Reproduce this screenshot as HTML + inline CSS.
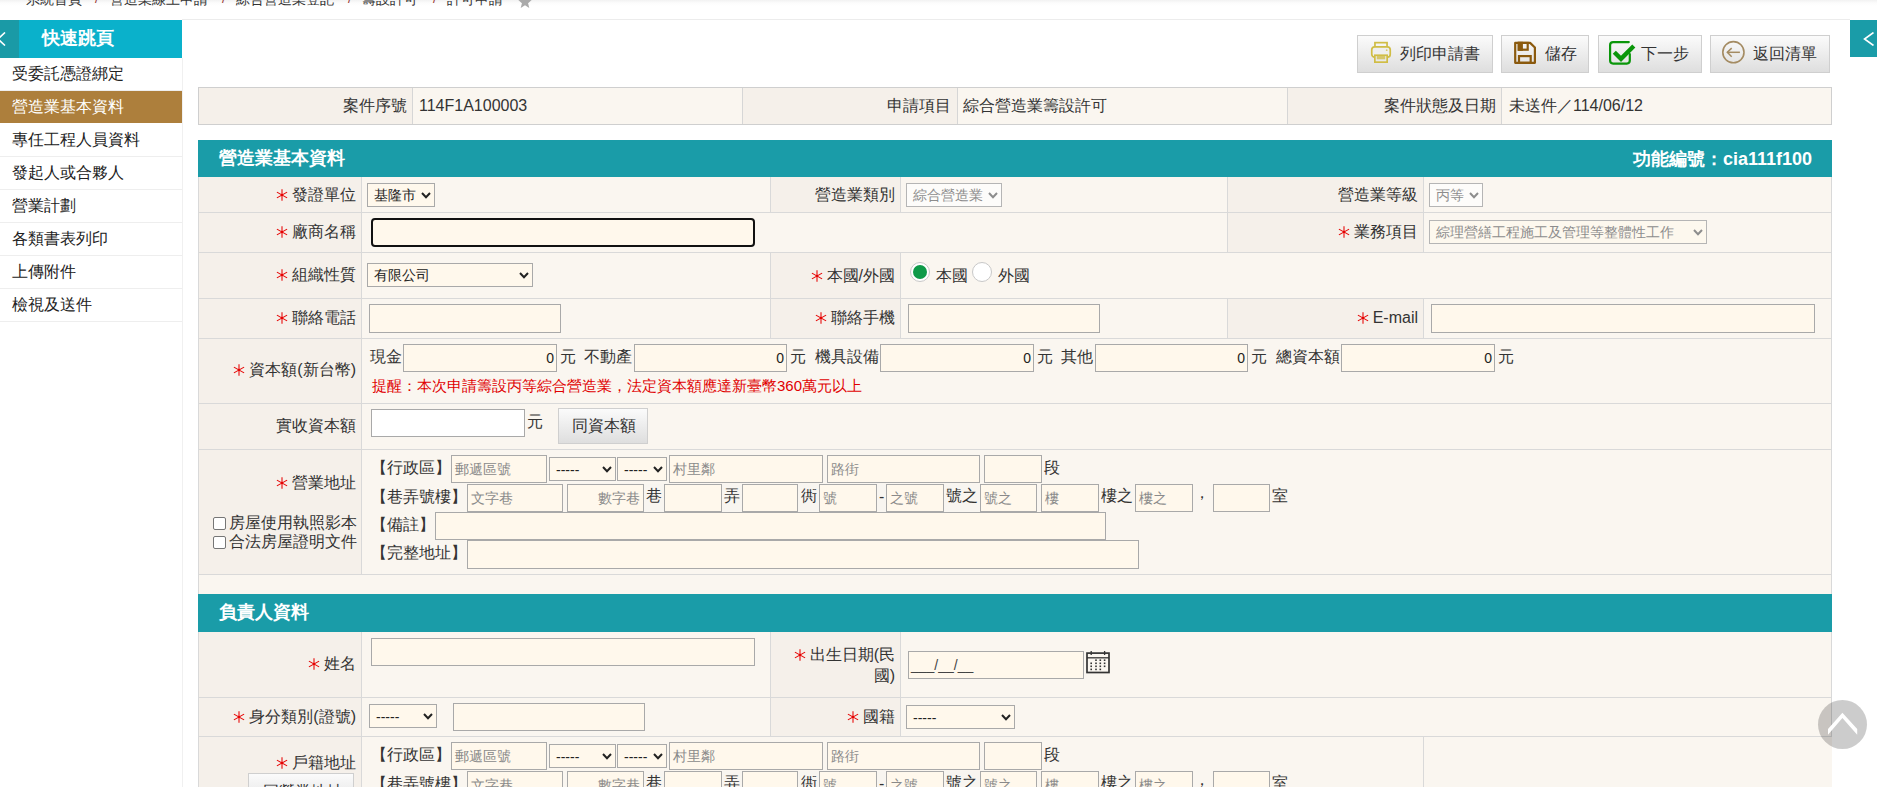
<!DOCTYPE html><html><head><meta charset="utf-8"><style>
html,body{margin:0;padding:0;width:1877px;height:787px;overflow:hidden;background:#fff;font-family:"Liberation Sans",sans-serif;}
body>div{position:absolute;}
.inp{box-sizing:border-box;border:1px solid #a9a9a9;}
.cb{width:13px;height:13px;box-sizing:border-box;border:1px solid #767676;border-radius:2px;background:#fff;}
.btn{box-sizing:border-box;border:1px solid #cfcfcf;background:linear-gradient(#fbfbfb,#dedede);}
</style></head><body>
<div style="left:0px;top:0px;width:1877px;height:6px;background:linear-gradient(#f2f2f2,#fcfcfc 50%,#fff)"></div>
<div style="left:26px;top:-8px;font-size:14px;line-height:1;color:#333;white-space:nowrap;">系統首頁</div>
<div style="left:110px;top:-8px;font-size:14px;line-height:1;color:#333;white-space:nowrap;">營造業線上申請</div>
<div style="left:236px;top:-8px;font-size:14px;line-height:1;color:#333;white-space:nowrap;">綜合營造業登記</div>
<div style="left:362px;top:-8px;font-size:14px;line-height:1;color:#333;white-space:nowrap;">籌設許可</div>
<div style="left:447px;top:-8px;font-size:14px;line-height:1;color:#333;white-space:nowrap;">許可申請</div>
<div style="left:95px;top:-8px;font-size:13px;line-height:1;color:#933;white-space:nowrap;">/</div>
<div style="left:222px;top:-8px;font-size:13px;line-height:1;color:#933;white-space:nowrap;">/</div>
<div style="left:348px;top:-8px;font-size:13px;line-height:1;color:#933;white-space:nowrap;">/</div>
<div style="left:433px;top:-8px;font-size:13px;line-height:1;color:#933;white-space:nowrap;">/</div>
<div style="left:518px;top:-5px;width:14px;height:14px"><svg width="14" height="14" viewBox="0 0 16 16" style="position:static"><polygon points="8,0 10.2,5.2 15.8,5.6 11.5,9.3 12.9,14.8 8,11.8 3.1,14.8 4.5,9.3 0.2,5.6 5.8,5.2" fill="#aaa"/></svg></div>
<div style="left:182px;top:19px;width:1668px;height:1px;background:#ececec"></div>
<div style="left:0px;top:20px;width:182px;height:38px;background:#0ab1cb"></div>
<div style="left:0px;top:20px;width:19px;height:38px;background:#1a9aa6"></div>
<div style="left:-6px;top:32px;width:12px;height:14px"><svg width="12" height="14" viewBox="0 0 12 14" style="position:static"><polyline points="11,0.5 4,7 11,13.5" fill="none" stroke="#fff" stroke-width="1.6"/></svg></div>
<div style="left:42px;top:29px;font-size:18px;line-height:1;color:#fff;font-weight:bold;white-space:nowrap;">快速跳頁</div>
<div style="left:0px;top:90px;width:182px;height:1px;background:#eeeeee"></div>
<div style="left:12px;top:66px;font-size:16px;line-height:1;color:#222;white-space:nowrap;">受委託憑證綁定</div>
<div style="left:0px;top:91px;width:182px;height:32px;background:#ad7f3c"></div>
<div style="left:12px;top:99px;font-size:16px;line-height:1;color:#fff;white-space:nowrap;">營造業基本資料</div>
<div style="left:0px;top:156px;width:182px;height:1px;background:#eeeeee"></div>
<div style="left:12px;top:132px;font-size:16px;line-height:1;color:#222;white-space:nowrap;">專任工程人員資料</div>
<div style="left:0px;top:189px;width:182px;height:1px;background:#eeeeee"></div>
<div style="left:12px;top:165px;font-size:16px;line-height:1;color:#222;white-space:nowrap;">發起人或合夥人</div>
<div style="left:0px;top:222px;width:182px;height:1px;background:#eeeeee"></div>
<div style="left:12px;top:198px;font-size:16px;line-height:1;color:#222;white-space:nowrap;">營業計劃</div>
<div style="left:0px;top:255px;width:182px;height:1px;background:#eeeeee"></div>
<div style="left:12px;top:231px;font-size:16px;line-height:1;color:#222;white-space:nowrap;">各類書表列印</div>
<div style="left:0px;top:288px;width:182px;height:1px;background:#eeeeee"></div>
<div style="left:12px;top:264px;font-size:16px;line-height:1;color:#222;white-space:nowrap;">上傳附件</div>
<div style="left:0px;top:321px;width:182px;height:1px;background:#eeeeee"></div>
<div style="left:12px;top:297px;font-size:16px;line-height:1;color:#222;white-space:nowrap;">檢視及送件</div>
<div style="left:182px;top:58px;width:1px;height:729px;background:#f0f0f0"></div>
<div style="left:1850px;top:20px;width:27px;height:37px;background:#1a9ca8"></div>
<div style="left:1863px;top:32px;width:12px;height:14px"><svg width="12" height="14" viewBox="0 0 12 14" style="position:static"><polyline points="10.5,0.5 1.5,7 10.5,13.5" fill="none" stroke="#fff" stroke-width="1.6"/></svg></div>
<div class="btn" style="left:1357px;top:35px;width:136px;height:38px"></div>
<div class="btn" style="left:1501px;top:35px;width:88px;height:38px"></div>
<div class="btn" style="left:1598px;top:35px;width:104px;height:38px"></div>
<div class="btn" style="left:1710px;top:35px;width:120px;height:38px"></div>
<div style="left:1365px;top:38px;width:32px;height:30px"><svg width="32" height="30" viewBox="0 0 32 30" style="position:static" fill="none" stroke="#d0bd45" stroke-width="1.7">
<rect x="9.95" y="4.65" width="12.1" height="6"/><rect x="6.75" y="8.85" width="18.5" height="10.5" rx="3" fill="#efefef"/><rect x="9.85" y="17.25" width="12.3" height="6.9" fill="#e9e9e9"/><rect x="11.8" y="17.9" width="8.4" height="3.4" fill="#d6c76a" stroke="none"/><circle cx="21.7" cy="12.2" r="0.9" fill="#d8ca70" stroke="none"/></svg></div>
<div style="left:1400px;top:46px;font-size:16px;line-height:1;color:#333;white-space:nowrap;">列印申請書</div>
<div style="left:1508px;top:38px;width:32px;height:30px"><svg width="32" height="30" viewBox="0 0 32 30" style="position:static" fill="none" stroke="#8b5a0e" stroke-width="2.2">
<path d="M7.2,4.9 H22.1 L26.9,9.5 V24.8 H7.2 Z" stroke-linejoin="round"/><rect x="10.8" y="4.9" width="8.9" height="6.8"/><rect x="9.7" y="3.8" width="5.2" height="9" fill="#8b5a0e" stroke="none"/><rect x="11" y="18.1" width="11.7" height="6.7"/></svg></div>
<div style="left:1545px;top:46px;font-size:16px;line-height:1;color:#333;white-space:nowrap;">儲存</div>
<div style="left:1605px;top:38px;width:34px;height:30px"><svg width="34" height="30" viewBox="0 0 34 30" style="position:static" fill="none" stroke="#0a960a">
<path d="M23.8,4.1 H8.1 Q5.1,4.1 5.1,7.1 V22.6 Q5.1,25.6 8.1,25.6 H21.8 Q24.8,25.6 24.8,22.6 V16" stroke-width="2.2" stroke-linecap="round"/><polyline points="9.3,14.2 16,20.8 28.8,8" stroke-width="4.4"/></svg></div>
<div style="left:1641px;top:46px;font-size:16px;line-height:1;color:#333;white-space:nowrap;">下一步</div>
<div style="left:1717px;top:38px;width:32px;height:30px"><svg width="32" height="30" viewBox="0 0 32 30" style="position:static" fill="none" stroke="#a48b62" stroke-width="1.6">
<circle cx="16.4" cy="14.2" r="10.6"/><polyline points="14.7,10.1 10.3,14.3 14.7,18.7" stroke-width="1.5"/><line x1="10.3" y1="14.3" x2="22.9" y2="14.3" stroke-width="1.5"/></svg></div>
<div style="left:1753px;top:46px;font-size:16px;line-height:1;color:#333;white-space:nowrap;">返回清單</div>
<div style="left:198px;top:87px;width:1634px;height:38px;background:#f5f0ea;border:1px solid #cfcfcf;box-sizing:border-box"></div>
<div style="left:412px;top:88px;width:330px;height:36px;background:#faf6f0"></div>
<div style="left:957px;top:88px;width:330px;height:36px;background:#faf6f0"></div>
<div style="left:1501px;top:88px;width:330px;height:36px;background:#faf6f0"></div>
<div style="left:412px;top:88px;width:1px;height:36px;background:#d6d6d6"></div>
<div style="left:742px;top:88px;width:1px;height:36px;background:#d6d6d6"></div>
<div style="left:957px;top:88px;width:1px;height:36px;background:#d6d6d6"></div>
<div style="left:1287px;top:88px;width:1px;height:36px;background:#d6d6d6"></div>
<div style="left:1501px;top:88px;width:1px;height:36px;background:#d6d6d6"></div>
<div style="right:1470px;top:98px;font-size:16px;line-height:1;color:#333;white-space:nowrap;text-align:right;">案件序號</div>
<div style="left:419px;top:98px;font-size:16px;line-height:1;color:#333;white-space:nowrap;">114F1A100003</div>
<div style="right:926px;top:98px;font-size:16px;line-height:1;color:#333;white-space:nowrap;text-align:right;">申請項目</div>
<div style="left:963px;top:98px;font-size:16px;line-height:1;color:#333;white-space:nowrap;">綜合營造業籌設許可</div>
<div style="right:381px;top:98px;font-size:16px;line-height:1;color:#333;white-space:nowrap;text-align:right;">案件狀態及日期</div>
<div style="left:1509px;top:98px;font-size:16px;line-height:1;color:#333;white-space:nowrap;">未送件／114/06/12</div>
<div style="left:198px;top:140px;width:1634px;height:647px;background:#faf6f0"></div>
<div style="left:198px;top:140px;width:1px;height:647px;background:#d9d9d9"></div>
<div style="left:1831px;top:140px;width:1px;height:597px;background:#d9d9d9"></div>
<div style="left:198px;top:140px;width:1634px;height:37px;background:#1a9ca8"></div>
<div style="left:219px;top:149px;font-size:18px;line-height:1;color:#fff;font-weight:bold;white-space:nowrap;">營造業基本資料</div>
<div style="right:65px;top:150px;font-size:18px;line-height:1;color:#fff;font-weight:bold;white-space:nowrap;text-align:right;">功能編號：cia111f100</div>
<div style="left:198px;top:177px;width:163px;height:35px;background:#f5f0ea"></div>
<div style="left:361px;top:177px;width:409px;height:35px;background:#faf6f0"></div>
<div style="left:770px;top:177px;width:130px;height:35px;background:#f5f0ea"></div>
<div style="left:900px;top:177px;width:327px;height:35px;background:#faf6f0"></div>
<div style="left:1227px;top:177px;width:196px;height:35px;background:#f5f0ea"></div>
<div style="left:1423px;top:177px;width:408px;height:35px;background:#faf6f0"></div>
<div style="left:361px;top:177px;width:1px;height:35px;background:#d9d9d9"></div>
<div style="left:770px;top:177px;width:1px;height:35px;background:#d9d9d9"></div>
<div style="left:900px;top:177px;width:1px;height:35px;background:#d9d9d9"></div>
<div style="left:1227px;top:177px;width:1px;height:35px;background:#d9d9d9"></div>
<div style="left:1423px;top:177px;width:1px;height:35px;background:#d9d9d9"></div>
<div style="left:198px;top:212px;width:1634px;height:1px;background:#d9d9d9"></div>
<div style="left:198px;top:177px;width:1px;height:35px;background:#d9d9d9"></div>
<div style="right:1521px;top:187px;font-size:16px;line-height:1;color:#333;white-space:nowrap;text-align:right;"><span style="display:inline-block;width:12px;height:13px;margin-right:4px;vertical-align:top;position:relative;top:2px"><svg width="12" height="13" viewBox="0 0 12 13" style="position:static;vertical-align:top"><g stroke="#e60000" stroke-width="1.05" stroke-linecap="butt"><line x1="6" y1="0.2" x2="6" y2="11.8"/><line x1="0.9" y1="3.1" x2="11.1" y2="8.9"/><line x1="0.9" y1="8.9" x2="11.1" y2="3.1"/></g><circle cx="6" cy="6" r="1.15" fill="#e60000"/></svg></span>發證單位</div>
<div class="inp" style="left:367px;top:183px;width:68px;height:24px;background:#fff8ec;border-color:#a9a9a9"></div>
<div style="left:374px;top:188px;font-size:14px;line-height:1;color:#222;white-space:nowrap;">基隆市</div>
<div style="left:421px;top:192px;width:10px;height:7px"><svg width="10" height="7" viewBox="0 0 10 7" style="position:static;display:block"><polyline points="1,1 5,5.2 9,1" fill="none" stroke="#222" stroke-width="2"/></svg></div>
<div style="right:982px;top:187px;font-size:16px;line-height:1;color:#333;white-space:nowrap;text-align:right;">營造業類別</div>
<div class="inp" style="left:906px;top:183px;width:96px;height:24px;background:#fdfcfa;border-color:#b5b5b5"></div>
<div style="left:913px;top:188px;font-size:14px;line-height:1;color:#8d8d8d;white-space:nowrap;">綜合營造業</div>
<div style="left:988px;top:192px;width:10px;height:7px"><svg width="10" height="7" viewBox="0 0 10 7" style="position:static;display:block"><polyline points="1,1 5,5.2 9,1" fill="none" stroke="#8d8d8d" stroke-width="2"/></svg></div>
<div style="right:459px;top:187px;font-size:16px;line-height:1;color:#333;white-space:nowrap;text-align:right;">營造業等級</div>
<div class="inp" style="left:1429px;top:183px;width:54px;height:24px;background:#fdfcfa;border-color:#b5b5b5"></div>
<div style="left:1436px;top:188px;font-size:14px;line-height:1;color:#8d8d8d;white-space:nowrap;">丙等</div>
<div style="left:1469px;top:192px;width:10px;height:7px"><svg width="10" height="7" viewBox="0 0 10 7" style="position:static;display:block"><polyline points="1,1 5,5.2 9,1" fill="none" stroke="#8d8d8d" stroke-width="2"/></svg></div>
<div style="left:198px;top:213px;width:163px;height:39px;background:#f5f0ea"></div>
<div style="left:361px;top:213px;width:866px;height:39px;background:#faf6f0"></div>
<div style="left:1227px;top:213px;width:196px;height:39px;background:#f5f0ea"></div>
<div style="left:1423px;top:213px;width:408px;height:39px;background:#faf6f0"></div>
<div style="left:361px;top:213px;width:1px;height:39px;background:#d9d9d9"></div>
<div style="left:1227px;top:213px;width:1px;height:39px;background:#d9d9d9"></div>
<div style="left:1423px;top:213px;width:1px;height:39px;background:#d9d9d9"></div>
<div style="left:198px;top:252px;width:1634px;height:1px;background:#d9d9d9"></div>
<div style="left:198px;top:213px;width:1px;height:39px;background:#d9d9d9"></div>
<div style="right:1521px;top:224px;font-size:16px;line-height:1;color:#333;white-space:nowrap;text-align:right;"><span style="display:inline-block;width:12px;height:13px;margin-right:4px;vertical-align:top;position:relative;top:2px"><svg width="12" height="13" viewBox="0 0 12 13" style="position:static;vertical-align:top"><g stroke="#e60000" stroke-width="1.05" stroke-linecap="butt"><line x1="6" y1="0.2" x2="6" y2="11.8"/><line x1="0.9" y1="3.1" x2="11.1" y2="8.9"/><line x1="0.9" y1="8.9" x2="11.1" y2="3.1"/></g><circle cx="6" cy="6" r="1.15" fill="#e60000"/></svg></span>廠商名稱</div>
<div style="left:371px;top:218px;width:384px;height:29px;box-sizing:border-box;border:2px solid #111;border-radius:4px;background:#fff8ec"></div>
<div style="right:459px;top:224px;font-size:16px;line-height:1;color:#333;white-space:nowrap;text-align:right;"><span style="display:inline-block;width:12px;height:13px;margin-right:4px;vertical-align:top;position:relative;top:2px"><svg width="12" height="13" viewBox="0 0 12 13" style="position:static;vertical-align:top"><g stroke="#e60000" stroke-width="1.05" stroke-linecap="butt"><line x1="6" y1="0.2" x2="6" y2="11.8"/><line x1="0.9" y1="3.1" x2="11.1" y2="8.9"/><line x1="0.9" y1="8.9" x2="11.1" y2="3.1"/></g><circle cx="6" cy="6" r="1.15" fill="#e60000"/></svg></span>業務項目</div>
<div class="inp" style="left:1429px;top:220px;width:278px;height:24px;background:#fdf8ee;border-color:#b5b5b5"></div>
<div style="left:1436px;top:225px;font-size:14px;line-height:1;color:#8d8d8d;white-space:nowrap;">綜理營繕工程施工及管理等整體性工作</div>
<div style="left:1693px;top:229px;width:10px;height:7px"><svg width="10" height="7" viewBox="0 0 10 7" style="position:static;display:block"><polyline points="1,1 5,5.2 9,1" fill="none" stroke="#8d8d8d" stroke-width="2"/></svg></div>
<div style="left:198px;top:253px;width:163px;height:45px;background:#f5f0ea"></div>
<div style="left:361px;top:253px;width:409px;height:45px;background:#faf6f0"></div>
<div style="left:770px;top:253px;width:130px;height:45px;background:#f5f0ea"></div>
<div style="left:900px;top:253px;width:931px;height:45px;background:#faf6f0"></div>
<div style="left:361px;top:253px;width:1px;height:45px;background:#d9d9d9"></div>
<div style="left:770px;top:253px;width:1px;height:45px;background:#d9d9d9"></div>
<div style="left:900px;top:253px;width:1px;height:45px;background:#d9d9d9"></div>
<div style="left:198px;top:298px;width:1634px;height:1px;background:#d9d9d9"></div>
<div style="left:198px;top:253px;width:1px;height:45px;background:#d9d9d9"></div>
<div style="right:1521px;top:267px;font-size:16px;line-height:1;color:#333;white-space:nowrap;text-align:right;"><span style="display:inline-block;width:12px;height:13px;margin-right:4px;vertical-align:top;position:relative;top:2px"><svg width="12" height="13" viewBox="0 0 12 13" style="position:static;vertical-align:top"><g stroke="#e60000" stroke-width="1.05" stroke-linecap="butt"><line x1="6" y1="0.2" x2="6" y2="11.8"/><line x1="0.9" y1="3.1" x2="11.1" y2="8.9"/><line x1="0.9" y1="8.9" x2="11.1" y2="3.1"/></g><circle cx="6" cy="6" r="1.15" fill="#e60000"/></svg></span>組織性質</div>
<div class="inp" style="left:367px;top:263px;width:166px;height:24px;background:#fff8ec;border-color:#a9a9a9"></div>
<div style="left:374px;top:268px;font-size:14px;line-height:1;color:#222;white-space:nowrap;">有限公司</div>
<div style="left:519px;top:272px;width:10px;height:7px"><svg width="10" height="7" viewBox="0 0 10 7" style="position:static;display:block"><polyline points="1,1 5,5.2 9,1" fill="none" stroke="#222" stroke-width="2"/></svg></div>
<div style="right:982px;top:268px;font-size:16px;line-height:1;color:#333;white-space:nowrap;text-align:right;"><span style="display:inline-block;width:12px;height:13px;margin-right:4px;vertical-align:top;position:relative;top:2px"><svg width="12" height="13" viewBox="0 0 12 13" style="position:static;vertical-align:top"><g stroke="#e60000" stroke-width="1.05" stroke-linecap="butt"><line x1="6" y1="0.2" x2="6" y2="11.8"/><line x1="0.9" y1="3.1" x2="11.1" y2="8.9"/><line x1="0.9" y1="8.9" x2="11.1" y2="3.1"/></g><circle cx="6" cy="6" r="1.15" fill="#e60000"/></svg></span>本國/外國</div>
<div style="left:910px;top:262px;width:20px;height:20px;box-sizing:border-box;border-radius:50%;border:1px solid #c8c8c8;background:#fff"></div>
<div style="left:913px;top:265px;width:14px;height:14px;border-radius:50%;background:#0e9a48"></div>
<div style="left:936px;top:268px;font-size:16px;line-height:1;color:#333;white-space:nowrap;">本國</div>
<div style="left:972px;top:262px;width:20px;height:20px;box-sizing:border-box;border-radius:50%;border:1px solid #c8c8c8;background:#fff"></div>
<div style="left:998px;top:268px;font-size:16px;line-height:1;color:#333;white-space:nowrap;">外國</div>
<div style="left:198px;top:299px;width:163px;height:39px;background:#f5f0ea"></div>
<div style="left:361px;top:299px;width:409px;height:39px;background:#faf6f0"></div>
<div style="left:770px;top:299px;width:130px;height:39px;background:#f5f0ea"></div>
<div style="left:900px;top:299px;width:327px;height:39px;background:#faf6f0"></div>
<div style="left:1227px;top:299px;width:196px;height:39px;background:#f5f0ea"></div>
<div style="left:1423px;top:299px;width:408px;height:39px;background:#faf6f0"></div>
<div style="left:361px;top:299px;width:1px;height:39px;background:#d9d9d9"></div>
<div style="left:770px;top:299px;width:1px;height:39px;background:#d9d9d9"></div>
<div style="left:900px;top:299px;width:1px;height:39px;background:#d9d9d9"></div>
<div style="left:1227px;top:299px;width:1px;height:39px;background:#d9d9d9"></div>
<div style="left:1423px;top:299px;width:1px;height:39px;background:#d9d9d9"></div>
<div style="left:198px;top:338px;width:1634px;height:1px;background:#d9d9d9"></div>
<div style="left:198px;top:299px;width:1px;height:39px;background:#d9d9d9"></div>
<div style="right:1521px;top:310px;font-size:16px;line-height:1;color:#333;white-space:nowrap;text-align:right;"><span style="display:inline-block;width:12px;height:13px;margin-right:4px;vertical-align:top;position:relative;top:2px"><svg width="12" height="13" viewBox="0 0 12 13" style="position:static;vertical-align:top"><g stroke="#e60000" stroke-width="1.05" stroke-linecap="butt"><line x1="6" y1="0.2" x2="6" y2="11.8"/><line x1="0.9" y1="3.1" x2="11.1" y2="8.9"/><line x1="0.9" y1="8.9" x2="11.1" y2="3.1"/></g><circle cx="6" cy="6" r="1.15" fill="#e60000"/></svg></span>聯絡電話</div>
<div class="inp" style="left:369px;top:304px;width:192px;height:29px;background:#fff8ec"></div>
<div style="right:982px;top:310px;font-size:16px;line-height:1;color:#333;white-space:nowrap;text-align:right;"><span style="display:inline-block;width:12px;height:13px;margin-right:4px;vertical-align:top;position:relative;top:2px"><svg width="12" height="13" viewBox="0 0 12 13" style="position:static;vertical-align:top"><g stroke="#e60000" stroke-width="1.05" stroke-linecap="butt"><line x1="6" y1="0.2" x2="6" y2="11.8"/><line x1="0.9" y1="3.1" x2="11.1" y2="8.9"/><line x1="0.9" y1="8.9" x2="11.1" y2="3.1"/></g><circle cx="6" cy="6" r="1.15" fill="#e60000"/></svg></span>聯絡手機</div>
<div class="inp" style="left:908px;top:304px;width:192px;height:29px;background:#fff8ec"></div>
<div style="right:459px;top:310px;font-size:16px;line-height:1;color:#333;white-space:nowrap;text-align:right;"><span style="display:inline-block;width:12px;height:13px;margin-right:4px;vertical-align:top;position:relative;top:2px"><svg width="12" height="13" viewBox="0 0 12 13" style="position:static;vertical-align:top"><g stroke="#e60000" stroke-width="1.05" stroke-linecap="butt"><line x1="6" y1="0.2" x2="6" y2="11.8"/><line x1="0.9" y1="3.1" x2="11.1" y2="8.9"/><line x1="0.9" y1="8.9" x2="11.1" y2="3.1"/></g><circle cx="6" cy="6" r="1.15" fill="#e60000"/></svg></span>E-mail</div>
<div class="inp" style="left:1431px;top:304px;width:384px;height:29px;background:#fff8ec"></div>
<div style="left:198px;top:339px;width:163px;height:64px;background:#f5f0ea"></div>
<div style="left:361px;top:339px;width:1470px;height:64px;background:#faf6f0"></div>
<div style="left:361px;top:339px;width:1px;height:64px;background:#d9d9d9"></div>
<div style="left:198px;top:403px;width:1634px;height:1px;background:#d9d9d9"></div>
<div style="left:198px;top:339px;width:1px;height:64px;background:#d9d9d9"></div>
<div style="right:1521px;top:362px;font-size:16px;line-height:1;color:#333;white-space:nowrap;text-align:right;"><span style="display:inline-block;width:12px;height:13px;margin-right:4px;vertical-align:top;position:relative;top:2px"><svg width="12" height="13" viewBox="0 0 12 13" style="position:static;vertical-align:top"><g stroke="#e60000" stroke-width="1.05" stroke-linecap="butt"><line x1="6" y1="0.2" x2="6" y2="11.8"/><line x1="0.9" y1="3.1" x2="11.1" y2="8.9"/><line x1="0.9" y1="8.9" x2="11.1" y2="3.1"/></g><circle cx="6" cy="6" r="1.15" fill="#e60000"/></svg></span>資本額(新台幣)</div>
<div style="left:370px;top:349px;font-size:16px;line-height:1;color:#333;white-space:nowrap;">現金</div>
<div class="inp" style="left:403px;top:344px;width:154px;height:28px;background:#fff8ec"></div>
<div style="right:1323px;top:351px;font-size:14px;line-height:1;color:#222;white-space:nowrap;text-align:right;">0</div>
<div style="left:560px;top:349px;font-size:16px;line-height:1;color:#333;white-space:nowrap;">元</div>
<div style="left:584px;top:349px;font-size:16px;line-height:1;color:#333;white-space:nowrap;">不動產</div>
<div class="inp" style="left:634px;top:344px;width:153px;height:28px;background:#fff8ec"></div>
<div style="right:1093px;top:351px;font-size:14px;line-height:1;color:#222;white-space:nowrap;text-align:right;">0</div>
<div style="left:790px;top:349px;font-size:16px;line-height:1;color:#333;white-space:nowrap;">元</div>
<div style="left:815px;top:349px;font-size:16px;line-height:1;color:#333;white-space:nowrap;">機具設備</div>
<div class="inp" style="left:880px;top:344px;width:154px;height:28px;background:#fff8ec"></div>
<div style="right:846px;top:351px;font-size:14px;line-height:1;color:#222;white-space:nowrap;text-align:right;">0</div>
<div style="left:1037px;top:349px;font-size:16px;line-height:1;color:#333;white-space:nowrap;">元</div>
<div style="left:1061px;top:349px;font-size:16px;line-height:1;color:#333;white-space:nowrap;">其他</div>
<div class="inp" style="left:1095px;top:344px;width:153px;height:28px;background:#fff8ec"></div>
<div style="right:632px;top:351px;font-size:14px;line-height:1;color:#222;white-space:nowrap;text-align:right;">0</div>
<div style="left:1251px;top:349px;font-size:16px;line-height:1;color:#333;white-space:nowrap;">元</div>
<div style="left:1276px;top:349px;font-size:16px;line-height:1;color:#333;white-space:nowrap;">總資本額</div>
<div class="inp" style="left:1341px;top:344px;width:154px;height:28px;background:#fff8ec"></div>
<div style="right:385px;top:351px;font-size:14px;line-height:1;color:#222;white-space:nowrap;text-align:right;">0</div>
<div style="left:1498px;top:349px;font-size:16px;line-height:1;color:#333;white-space:nowrap;">元</div>
<div style="left:372px;top:378px;font-size:15px;line-height:1;color:#e00000;white-space:nowrap;">提醒：本次申請籌設丙等綜合營造業，法定資本額應達新臺幣360萬元以上</div>
<div style="left:198px;top:404px;width:163px;height:45px;background:#f5f0ea"></div>
<div style="left:361px;top:404px;width:1470px;height:45px;background:#faf6f0"></div>
<div style="left:361px;top:404px;width:1px;height:45px;background:#d9d9d9"></div>
<div style="left:198px;top:449px;width:1634px;height:1px;background:#d9d9d9"></div>
<div style="left:198px;top:404px;width:1px;height:45px;background:#d9d9d9"></div>
<div style="right:1521px;top:418px;font-size:16px;line-height:1;color:#333;white-space:nowrap;text-align:right;">實收資本額</div>
<div class="inp" style="left:371px;top:409px;width:154px;height:28px;background:#fff"></div>
<div style="left:527px;top:414px;font-size:16px;line-height:1;color:#333;white-space:nowrap;">元</div>
<div class="btn" style="left:558px;top:408px;width:90px;height:36px"></div>
<div style="left:572px;top:418px;font-size:16px;line-height:1;color:#333;white-space:nowrap;">同資本額</div>
<div style="left:198px;top:450px;width:163px;height:124px;background:#f5f0ea"></div>
<div style="left:361px;top:450px;width:1470px;height:124px;background:#faf6f0"></div>
<div style="left:361px;top:450px;width:1px;height:124px;background:#d9d9d9"></div>
<div style="left:198px;top:574px;width:1634px;height:1px;background:#d9d9d9"></div>
<div style="left:198px;top:450px;width:1px;height:124px;background:#d9d9d9"></div>
<div style="left:371px;top:460px;font-size:16px;line-height:1;color:#333;white-space:nowrap;">【行政區】</div>
<div class="inp" style="left:451px;top:455px;width:96px;height:28px;background:#fff8ec"></div>
<div style="left:455px;top:462px;font-size:14px;line-height:1;color:#8a8a8a;white-space:nowrap;">郵遞區號</div>
<div class="inp" style="left:549px;top:457px;width:67px;height:24px;background:#fff8ec;border-color:#a9a9a9"></div>
<div style="left:556px;top:463px;font-size:14px;line-height:1;color:#222;white-space:nowrap;">-----</div>
<div style="left:602px;top:466px;width:10px;height:7px"><svg width="10" height="7" viewBox="0 0 10 7" style="position:static;display:block"><polyline points="1,1 5,5.2 9,1" fill="none" stroke="#222" stroke-width="2"/></svg></div>
<div class="inp" style="left:617px;top:457px;width:50px;height:24px;background:#fff8ec;border-color:#a9a9a9"></div>
<div style="left:624px;top:463px;font-size:14px;line-height:1;color:#222;white-space:nowrap;">-----</div>
<div style="left:653px;top:466px;width:10px;height:7px"><svg width="10" height="7" viewBox="0 0 10 7" style="position:static;display:block"><polyline points="1,1 5,5.2 9,1" fill="none" stroke="#222" stroke-width="2"/></svg></div>
<div class="inp" style="left:669px;top:455px;width:154px;height:28px;background:#fff8ec"></div>
<div style="left:673px;top:462px;font-size:14px;line-height:1;color:#8a8a8a;white-space:nowrap;">村里鄰</div>
<div class="inp" style="left:827px;top:455px;width:153px;height:28px;background:#fff8ec"></div>
<div style="left:831px;top:462px;font-size:14px;line-height:1;color:#8a8a8a;white-space:nowrap;">路街</div>
<div class="inp" style="left:984px;top:455px;width:58px;height:28px;background:#fff8ec"></div>
<div style="left:1044px;top:460px;font-size:16px;line-height:1;color:#333;white-space:nowrap;">段</div>
<div style="left:371px;top:489px;font-size:16px;line-height:1;color:#333;white-space:nowrap;">【巷弄號樓】</div>
<div class="inp" style="left:467px;top:484px;width:96px;height:28px;background:#fff8ec"></div>
<div style="left:471px;top:491px;font-size:14px;line-height:1;color:#8a8a8a;white-space:nowrap;">文字巷</div>
<div class="inp" style="left:567px;top:484px;width:77px;height:28px;background:#fff8ec"></div>
<div style="right:1237px;top:491px;font-size:14px;line-height:1;color:#8a8a8a;white-space:nowrap;text-align:right;">數字巷</div>
<div style="left:644px;top:484px;width:20px;height:28px;background:#f8f5f0"></div>
<div style="left:646px;top:488px;font-size:16px;line-height:1;color:#333;white-space:nowrap;">巷</div>
<div class="inp" style="left:664px;top:484px;width:58px;height:28px;background:#fff8ec"></div>
<div style="left:722px;top:484px;width:20px;height:28px;background:#f8f5f0"></div>
<div style="left:724px;top:488px;font-size:16px;line-height:1;color:#333;white-space:nowrap;">弄</div>
<div class="inp" style="left:742px;top:484px;width:56px;height:28px;background:#fff8ec"></div>
<div style="left:798px;top:484px;width:21px;height:28px;background:#f8f5f0"></div>
<div style="left:801px;top:488px;font-size:16px;line-height:1;color:#333;white-space:nowrap;">衖</div>
<div class="inp" style="left:819px;top:484px;width:58px;height:28px;background:#fff8ec"></div>
<div style="left:823px;top:491px;font-size:14px;line-height:1;color:#8a8a8a;white-space:nowrap;">號</div>
<div style="left:877px;top:484px;width:9px;height:28px;background:#f8f5f0"></div>
<div style="left:879px;top:489px;font-size:16px;line-height:1;color:#333;white-space:nowrap;">-</div>
<div class="inp" style="left:886px;top:484px;width:58px;height:28px;background:#fff8ec"></div>
<div style="left:890px;top:491px;font-size:14px;line-height:1;color:#8a8a8a;white-space:nowrap;">之號</div>
<div style="left:944px;top:484px;width:36px;height:28px;background:#f8f5f0"></div>
<div style="left:946px;top:488px;font-size:16px;line-height:1;color:#333;white-space:nowrap;">號之</div>
<div class="inp" style="left:980px;top:484px;width:57px;height:28px;background:#fff8ec"></div>
<div style="left:984px;top:491px;font-size:14px;line-height:1;color:#8a8a8a;white-space:nowrap;">號之</div>
<div class="inp" style="left:1041px;top:484px;width:58px;height:28px;background:#fff8ec"></div>
<div style="left:1045px;top:491px;font-size:14px;line-height:1;color:#8a8a8a;white-space:nowrap;">樓</div>
<div style="left:1101px;top:488px;font-size:16px;line-height:1;color:#333;white-space:nowrap;">樓之</div>
<div class="inp" style="left:1135px;top:484px;width:58px;height:28px;background:#fff8ec"></div>
<div style="left:1139px;top:491px;font-size:14px;line-height:1;color:#8a8a8a;white-space:nowrap;">樓之</div>
<div style="left:1194px;top:485px;font-size:16px;line-height:1;color:#333;white-space:nowrap;">，</div>
<div class="inp" style="left:1213px;top:484px;width:57px;height:28px;background:#fff8ec"></div>
<div style="left:1272px;top:488px;font-size:16px;line-height:1;color:#333;white-space:nowrap;">室</div>
<div style="left:371px;top:517px;font-size:16px;line-height:1;color:#333;white-space:nowrap;">【備註】</div>
<div class="inp" style="left:435px;top:512px;width:671px;height:28px;background:#fff8ec"></div>
<div style="left:371px;top:545px;font-size:16px;line-height:1;color:#333;white-space:nowrap;">【完整地址】</div>
<div class="inp" style="left:467px;top:540px;width:672px;height:29px;background:#fff8ec"></div>
<div style="right:1521px;top:475px;font-size:16px;line-height:1;color:#333;white-space:nowrap;text-align:right;"><span style="display:inline-block;width:12px;height:13px;margin-right:4px;vertical-align:top;position:relative;top:2px"><svg width="12" height="13" viewBox="0 0 12 13" style="position:static;vertical-align:top"><g stroke="#e60000" stroke-width="1.05" stroke-linecap="butt"><line x1="6" y1="0.2" x2="6" y2="11.8"/><line x1="0.9" y1="3.1" x2="11.1" y2="8.9"/><line x1="0.9" y1="8.9" x2="11.1" y2="3.1"/></g><circle cx="6" cy="6" r="1.15" fill="#e60000"/></svg></span>營業地址</div>
<div class="cb" style="left:213px;top:517px"></div>
<div style="left:229px;top:515px;font-size:16px;line-height:1;color:#333;white-space:nowrap;">房屋使用執照影本</div>
<div class="cb" style="left:213px;top:536px"></div>
<div style="left:229px;top:534px;font-size:16px;line-height:1;color:#333;white-space:nowrap;">合法房屋證明文件</div>
<div style="left:198px;top:594px;width:1634px;height:38px;background:#1a9ca8"></div>
<div style="left:219px;top:603px;font-size:18px;line-height:1;color:#fff;font-weight:bold;white-space:nowrap;">負責人資料</div>
<div style="left:198px;top:632px;width:163px;height:65px;background:#f5f0ea"></div>
<div style="left:361px;top:632px;width:409px;height:65px;background:#faf6f0"></div>
<div style="left:770px;top:632px;width:130px;height:65px;background:#f5f0ea"></div>
<div style="left:900px;top:632px;width:931px;height:65px;background:#faf6f0"></div>
<div style="left:361px;top:632px;width:1px;height:65px;background:#d9d9d9"></div>
<div style="left:770px;top:632px;width:1px;height:65px;background:#d9d9d9"></div>
<div style="left:900px;top:632px;width:1px;height:65px;background:#d9d9d9"></div>
<div style="left:198px;top:697px;width:1634px;height:1px;background:#d9d9d9"></div>
<div style="left:198px;top:632px;width:1px;height:65px;background:#d9d9d9"></div>
<div style="right:1521px;top:656px;font-size:16px;line-height:1;color:#333;white-space:nowrap;text-align:right;"><span style="display:inline-block;width:12px;height:13px;margin-right:4px;vertical-align:top;position:relative;top:2px"><svg width="12" height="13" viewBox="0 0 12 13" style="position:static;vertical-align:top"><g stroke="#e60000" stroke-width="1.05" stroke-linecap="butt"><line x1="6" y1="0.2" x2="6" y2="11.8"/><line x1="0.9" y1="3.1" x2="11.1" y2="8.9"/><line x1="0.9" y1="8.9" x2="11.1" y2="3.1"/></g><circle cx="6" cy="6" r="1.15" fill="#e60000"/></svg></span>姓名</div>
<div class="inp" style="left:371px;top:638px;width:384px;height:28px;background:#fff8ec"></div>
<div style="right:982px;top:647px;font-size:16px;line-height:1;color:#333;white-space:nowrap;text-align:right;"><span style="display:inline-block;width:12px;height:13px;margin-right:4px;vertical-align:top;position:relative;top:2px"><svg width="12" height="13" viewBox="0 0 12 13" style="position:static;vertical-align:top"><g stroke="#e60000" stroke-width="1.05" stroke-linecap="butt"><line x1="6" y1="0.2" x2="6" y2="11.8"/><line x1="0.9" y1="3.1" x2="11.1" y2="8.9"/><line x1="0.9" y1="8.9" x2="11.1" y2="3.1"/></g><circle cx="6" cy="6" r="1.15" fill="#e60000"/></svg></span>出生日期(民</div>
<div style="right:982px;top:668px;font-size:16px;line-height:1;color:#333;white-space:nowrap;text-align:right;">國)</div>
<div class="inp" style="left:908px;top:651px;width:176px;height:28px;background:#fff8ec"></div>
<div style="left:911px;top:658px;font-size:14px;line-height:1;color:#444;white-space:nowrap;">___/__/__</div>
<div style="left:1086px;top:651px;width:25px;height:24px"><svg width="25" height="24" viewBox="0 0 25 24" style="position:static">
<rect x="1" y="2.1" width="22" height="19.4" fill="none" stroke="#333" stroke-width="1.7"/><line x1="1" y1="6.8" x2="23" y2="6.8" stroke="#333" stroke-width="1.3"/>
<line x1="5.2" y1="0" x2="5.2" y2="4" stroke="#333" stroke-width="1.3"/><line x1="18.6" y1="0" x2="18.6" y2="4" stroke="#333" stroke-width="1.3"/>
<g fill="#333"><rect x="9.2" y="8.4" width="1.6" height="1.6"/><rect x="13.5" y="8.4" width="1.6" height="1.6"/><rect x="17.8" y="8.4" width="1.6" height="1.6"/><rect x="4.4" y="11.5" width="1.6" height="1.6"/><rect x="9.2" y="11.5" width="1.6" height="1.6"/><rect x="13.5" y="11.5" width="1.6" height="1.6"/><rect x="17.8" y="11.5" width="1.6" height="1.6"/><rect x="4.4" y="14.5" width="1.6" height="1.6"/><rect x="9.2" y="14.5" width="1.6" height="1.6"/><rect x="13.5" y="14.5" width="1.6" height="1.6"/><rect x="17.8" y="14.5" width="1.6" height="1.6"/><rect x="4.4" y="17.6" width="1.6" height="1.6"/><rect x="9.2" y="17.6" width="1.6" height="1.6"/><rect x="13.5" y="17.6" width="1.6" height="1.6"/></g></svg></div>
<div style="left:198px;top:698px;width:163px;height:38px;background:#f5f0ea"></div>
<div style="left:361px;top:698px;width:409px;height:38px;background:#faf6f0"></div>
<div style="left:770px;top:698px;width:130px;height:38px;background:#f5f0ea"></div>
<div style="left:900px;top:698px;width:931px;height:38px;background:#faf6f0"></div>
<div style="left:361px;top:698px;width:1px;height:38px;background:#d9d9d9"></div>
<div style="left:770px;top:698px;width:1px;height:38px;background:#d9d9d9"></div>
<div style="left:900px;top:698px;width:1px;height:38px;background:#d9d9d9"></div>
<div style="left:198px;top:736px;width:1634px;height:1px;background:#d9d9d9"></div>
<div style="left:198px;top:698px;width:1px;height:38px;background:#d9d9d9"></div>
<div style="right:1521px;top:709px;font-size:16px;line-height:1;color:#333;white-space:nowrap;text-align:right;"><span style="display:inline-block;width:12px;height:13px;margin-right:4px;vertical-align:top;position:relative;top:2px"><svg width="12" height="13" viewBox="0 0 12 13" style="position:static;vertical-align:top"><g stroke="#e60000" stroke-width="1.05" stroke-linecap="butt"><line x1="6" y1="0.2" x2="6" y2="11.8"/><line x1="0.9" y1="3.1" x2="11.1" y2="8.9"/><line x1="0.9" y1="8.9" x2="11.1" y2="3.1"/></g><circle cx="6" cy="6" r="1.15" fill="#e60000"/></svg></span>身分類別(證號)</div>
<div class="inp" style="left:369px;top:704px;width:68px;height:24px;background:#fff8ec;border-color:#a9a9a9"></div>
<div style="left:376px;top:710px;font-size:14px;line-height:1;color:#222;white-space:nowrap;">-----</div>
<div style="left:423px;top:713px;width:10px;height:7px"><svg width="10" height="7" viewBox="0 0 10 7" style="position:static;display:block"><polyline points="1,1 5,5.2 9,1" fill="none" stroke="#222" stroke-width="2"/></svg></div>
<div class="inp" style="left:453px;top:703px;width:192px;height:28px;background:#fff8ec"></div>
<div style="right:982px;top:709px;font-size:16px;line-height:1;color:#333;white-space:nowrap;text-align:right;"><span style="display:inline-block;width:12px;height:13px;margin-right:4px;vertical-align:top;position:relative;top:2px"><svg width="12" height="13" viewBox="0 0 12 13" style="position:static;vertical-align:top"><g stroke="#e60000" stroke-width="1.05" stroke-linecap="butt"><line x1="6" y1="0.2" x2="6" y2="11.8"/><line x1="0.9" y1="3.1" x2="11.1" y2="8.9"/><line x1="0.9" y1="8.9" x2="11.1" y2="3.1"/></g><circle cx="6" cy="6" r="1.15" fill="#e60000"/></svg></span>國籍</div>
<div class="inp" style="left:906px;top:705px;width:109px;height:24px;background:#fff8ec;border-color:#a9a9a9"></div>
<div style="left:913px;top:711px;font-size:14px;line-height:1;color:#222;white-space:nowrap;">-----</div>
<div style="left:1001px;top:714px;width:10px;height:7px"><svg width="10" height="7" viewBox="0 0 10 7" style="position:static;display:block"><polyline points="1,1 5,5.2 9,1" fill="none" stroke="#222" stroke-width="2"/></svg></div>
<div style="left:198px;top:737px;width:163px;height:63px;background:#f5f0ea"></div>
<div style="left:361px;top:737px;width:1062px;height:63px;background:#faf6f0"></div>
<div style="left:1423px;top:737px;width:408px;height:63px;background:#faf6f0"></div>
<div style="left:361px;top:737px;width:1px;height:63px;background:#d9d9d9"></div>
<div style="left:1423px;top:737px;width:1px;height:63px;background:#d9d9d9"></div>
<div style="left:198px;top:800px;width:1634px;height:1px;background:#d9d9d9"></div>
<div style="left:198px;top:737px;width:1px;height:63px;background:#d9d9d9"></div>
<div style="right:1521px;top:755px;font-size:16px;line-height:1;color:#333;white-space:nowrap;text-align:right;"><span style="display:inline-block;width:12px;height:13px;margin-right:4px;vertical-align:top;position:relative;top:2px"><svg width="12" height="13" viewBox="0 0 12 13" style="position:static;vertical-align:top"><g stroke="#e60000" stroke-width="1.05" stroke-linecap="butt"><line x1="6" y1="0.2" x2="6" y2="11.8"/><line x1="0.9" y1="3.1" x2="11.1" y2="8.9"/><line x1="0.9" y1="8.9" x2="11.1" y2="3.1"/></g><circle cx="6" cy="6" r="1.15" fill="#e60000"/></svg></span>戶籍地址</div>
<div class="btn" style="left:248px;top:773px;width:106px;height:37px"></div>
<div style="left:263px;top:784px;font-size:16px;line-height:1;color:#333;white-space:nowrap;">同營業地址</div>
<div style="left:371px;top:747px;font-size:16px;line-height:1;color:#333;white-space:nowrap;">【行政區】</div>
<div class="inp" style="left:451px;top:742px;width:96px;height:28px;background:#fff8ec"></div>
<div style="left:455px;top:749px;font-size:14px;line-height:1;color:#8a8a8a;white-space:nowrap;">郵遞區號</div>
<div class="inp" style="left:549px;top:744px;width:67px;height:24px;background:#fff8ec;border-color:#a9a9a9"></div>
<div style="left:556px;top:750px;font-size:14px;line-height:1;color:#222;white-space:nowrap;">-----</div>
<div style="left:602px;top:753px;width:10px;height:7px"><svg width="10" height="7" viewBox="0 0 10 7" style="position:static;display:block"><polyline points="1,1 5,5.2 9,1" fill="none" stroke="#222" stroke-width="2"/></svg></div>
<div class="inp" style="left:617px;top:744px;width:50px;height:24px;background:#fff8ec;border-color:#a9a9a9"></div>
<div style="left:624px;top:750px;font-size:14px;line-height:1;color:#222;white-space:nowrap;">-----</div>
<div style="left:653px;top:753px;width:10px;height:7px"><svg width="10" height="7" viewBox="0 0 10 7" style="position:static;display:block"><polyline points="1,1 5,5.2 9,1" fill="none" stroke="#222" stroke-width="2"/></svg></div>
<div class="inp" style="left:669px;top:742px;width:154px;height:28px;background:#fff8ec"></div>
<div style="left:673px;top:749px;font-size:14px;line-height:1;color:#8a8a8a;white-space:nowrap;">村里鄰</div>
<div class="inp" style="left:827px;top:742px;width:153px;height:28px;background:#fff8ec"></div>
<div style="left:831px;top:749px;font-size:14px;line-height:1;color:#8a8a8a;white-space:nowrap;">路街</div>
<div class="inp" style="left:984px;top:742px;width:58px;height:28px;background:#fff8ec"></div>
<div style="left:1044px;top:747px;font-size:16px;line-height:1;color:#333;white-space:nowrap;">段</div>
<div style="left:371px;top:776px;font-size:16px;line-height:1;color:#333;white-space:nowrap;">【巷弄號樓】</div>
<div class="inp" style="left:467px;top:771px;width:96px;height:28px;background:#fff8ec"></div>
<div style="left:471px;top:778px;font-size:14px;line-height:1;color:#8a8a8a;white-space:nowrap;">文字巷</div>
<div class="inp" style="left:567px;top:771px;width:77px;height:28px;background:#fff8ec"></div>
<div style="right:1237px;top:778px;font-size:14px;line-height:1;color:#8a8a8a;white-space:nowrap;text-align:right;">數字巷</div>
<div style="left:644px;top:771px;width:20px;height:28px;background:#f8f5f0"></div>
<div style="left:646px;top:775px;font-size:16px;line-height:1;color:#333;white-space:nowrap;">巷</div>
<div class="inp" style="left:664px;top:771px;width:58px;height:28px;background:#fff8ec"></div>
<div style="left:722px;top:771px;width:20px;height:28px;background:#f8f5f0"></div>
<div style="left:724px;top:775px;font-size:16px;line-height:1;color:#333;white-space:nowrap;">弄</div>
<div class="inp" style="left:742px;top:771px;width:56px;height:28px;background:#fff8ec"></div>
<div style="left:798px;top:771px;width:21px;height:28px;background:#f8f5f0"></div>
<div style="left:801px;top:775px;font-size:16px;line-height:1;color:#333;white-space:nowrap;">衖</div>
<div class="inp" style="left:819px;top:771px;width:58px;height:28px;background:#fff8ec"></div>
<div style="left:823px;top:778px;font-size:14px;line-height:1;color:#8a8a8a;white-space:nowrap;">號</div>
<div style="left:877px;top:771px;width:9px;height:28px;background:#f8f5f0"></div>
<div style="left:879px;top:776px;font-size:16px;line-height:1;color:#333;white-space:nowrap;">-</div>
<div class="inp" style="left:886px;top:771px;width:58px;height:28px;background:#fff8ec"></div>
<div style="left:890px;top:778px;font-size:14px;line-height:1;color:#8a8a8a;white-space:nowrap;">之號</div>
<div style="left:944px;top:771px;width:36px;height:28px;background:#f8f5f0"></div>
<div style="left:946px;top:775px;font-size:16px;line-height:1;color:#333;white-space:nowrap;">號之</div>
<div class="inp" style="left:980px;top:771px;width:57px;height:28px;background:#fff8ec"></div>
<div style="left:984px;top:778px;font-size:14px;line-height:1;color:#8a8a8a;white-space:nowrap;">號之</div>
<div class="inp" style="left:1041px;top:771px;width:58px;height:28px;background:#fff8ec"></div>
<div style="left:1045px;top:778px;font-size:14px;line-height:1;color:#8a8a8a;white-space:nowrap;">樓</div>
<div style="left:1101px;top:775px;font-size:16px;line-height:1;color:#333;white-space:nowrap;">樓之</div>
<div class="inp" style="left:1135px;top:771px;width:58px;height:28px;background:#fff8ec"></div>
<div style="left:1139px;top:778px;font-size:14px;line-height:1;color:#8a8a8a;white-space:nowrap;">樓之</div>
<div style="left:1194px;top:772px;font-size:16px;line-height:1;color:#333;white-space:nowrap;">，</div>
<div class="inp" style="left:1213px;top:771px;width:57px;height:28px;background:#fff8ec"></div>
<div style="left:1272px;top:775px;font-size:16px;line-height:1;color:#333;white-space:nowrap;">室</div>
<div style="left:371px;top:804px;font-size:16px;line-height:1;color:#333;white-space:nowrap;">【備註】</div>
<div class="inp" style="left:435px;top:799px;width:671px;height:28px;background:#fff8ec"></div>
<div style="left:371px;top:832px;font-size:16px;line-height:1;color:#333;white-space:nowrap;">【完整地址】</div>
<div class="inp" style="left:467px;top:827px;width:672px;height:29px;background:#fff8ec"></div>
<div style="left:1818px;top:700px;width:49px;height:49px;border-radius:50%;background:rgba(0,0,0,0.2)"></div>
<div style="left:1826px;top:710px;width:34px;height:28px"><svg width="34" height="28" viewBox="0 0 34 28" style="position:static"><polygon points="2,18.9 16.4,2.7 31.2,18.9 31.2,24.7 16.4,7.9 2,24.7" fill="#fff"/></svg></div>
</body></html>
